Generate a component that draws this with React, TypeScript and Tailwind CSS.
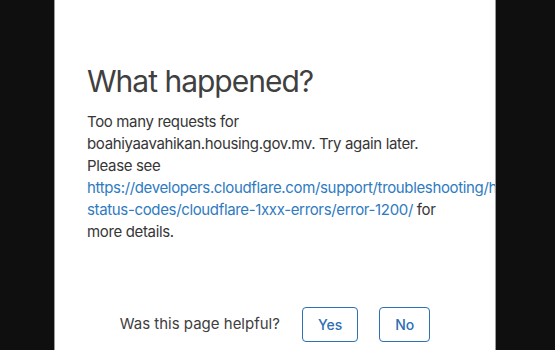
export default function App() {
  return (
    <div className="h-[350px] w-[555px] overflow-hidden bg-[#0f0f0f] font-['Inter',sans-serif]">
      <div className="ml-[54px] h-[350px] w-[442px] overflow-hidden border-x border-[#9a9a9a] bg-white">
        <div className="pl-[32px] pt-[62px]">
          <h2 className="text-[30px] leading-[38px] tracking-[-1px] font-normal text-[#404040]">What happened?</h2>
          <div className="mt-[11px] text-[15px] leading-[22px] tracking-[-0.35px] text-[#363636]">
            <div className="whitespace-nowrap">Too many requests for</div>
            <div className="whitespace-nowrap">boahiyaavahikan.housing.gov.mv. Try again later.</div>
            <div className="whitespace-nowrap">Please see</div>
            <div className="whitespace-nowrap">
              <a href="#" className="text-[#2f7bbf]">
                https://developers.cloudflare.com/support/troubleshooting/http-
              </a>
            </div>
            <div className="whitespace-nowrap">
              <a href="#" className="text-[#2f7bbf]">
                status-codes/cloudflare-1xxx-errors/error-1200/
              </a>{" "}
              for
            </div>
            <div className="whitespace-nowrap">more details.</div>
          </div>
        </div>
        <div className="mt-[64px] flex items-center justify-center gap-[22px]">
          <span className="text-[15px] text-[#404040]">Was this page helpful?</span>
          <div className="flex gap-[21px]">
            <button className="h-[35px] rounded-[4px] border border-[#2f6fb3] px-[15px] text-[14px] font-medium text-[#2f6fb3]">
              Yes
            </button>
            <button className="h-[35px] rounded-[4px] border border-[#2f6fb3] px-[15px] text-[14px] font-medium text-[#2f6fb3]">
              No
            </button>
          </div>
        </div>
      </div>
    </div>
  );
}
